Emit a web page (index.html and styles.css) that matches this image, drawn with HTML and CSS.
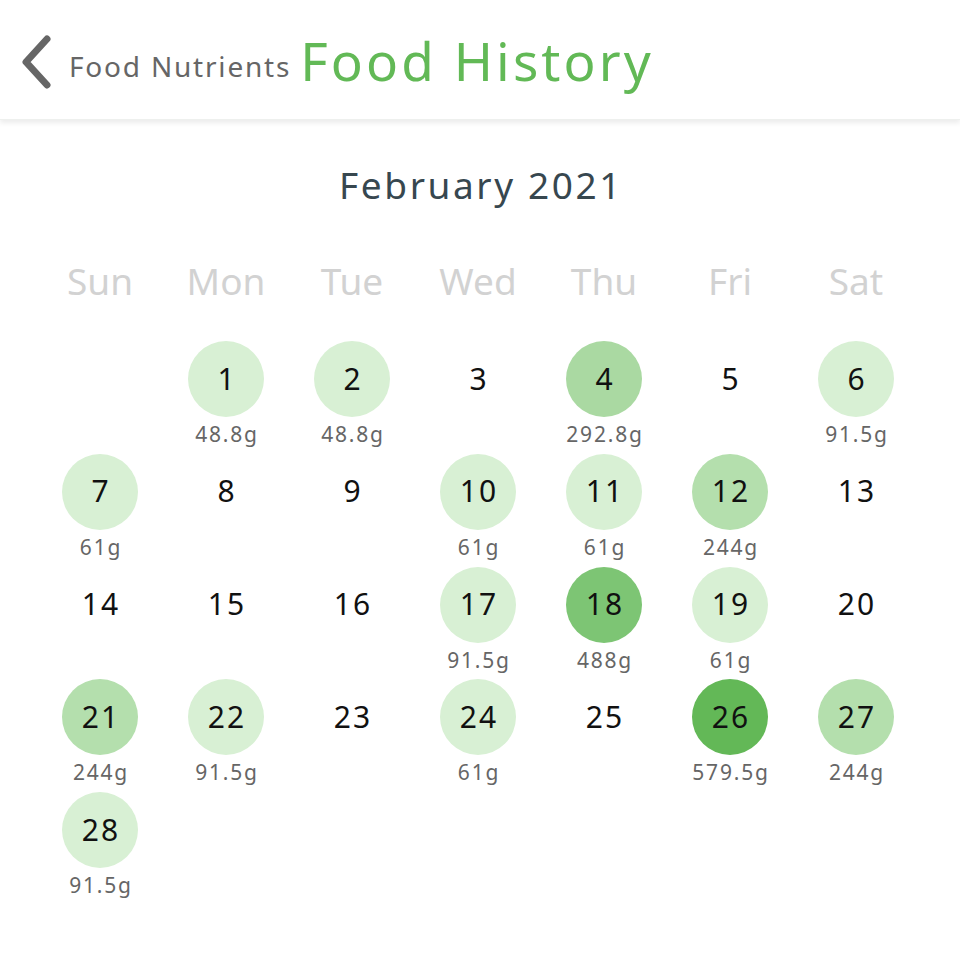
FILE: index.html
```html
<!DOCTYPE html>
<html lang="en">
<head>
    <meta charset="UTF-8">
    <title>Food History</title>
    <link rel="stylesheet" href="styles.css">
</head>
<body>
<div class="header">
    <svg class="back" width="34" height="54" viewBox="0 0 34 54">
        <path d="M28 4 L7 27 L28 50" fill="none" stroke="#666" stroke-width="7" stroke-linecap="round" stroke-linejoin="round"/>
    </svg>
    <span class="prev">Food Nutrients</span>
    <span class="title">Food History</span>
</div>
<div class="month">February 2021</div>
<ul class="week">
    <li>Sun</li><li>Mon</li><li>Tue</li><li>Wed</li><li>Thu</li><li>Fri</li><li>Sat</li>
</ul>
<ul class="days">
    <li></li>
    <li><b class="l1">1</b><i>48.8g</i></li>
    <li><b class="l1">2</b><i>48.8g</i></li>
    <li><b>3</b></li>
    <li><b class="l3">4</b><i>292.8g</i></li>
    <li><b>5</b></li>
    <li><b class="l1">6</b><i>91.5g</i></li>

    <li><b class="l1">7</b><i>61g</i></li>
    <li><b>8</b></li>
    <li><b>9</b></li>
    <li><b class="l1">10</b><i>61g</i></li>
    <li><b class="l1">11</b><i>61g</i></li>
    <li><b class="l2">12</b><i>244g</i></li>
    <li><b>13</b></li>

    <li><b>14</b></li>
    <li><b>15</b></li>
    <li><b>16</b></li>
    <li><b class="l1">17</b><i>91.5g</i></li>
    <li><b class="l4">18</b><i>488g</i></li>
    <li><b class="l1">19</b><i>61g</i></li>
    <li><b>20</b></li>

    <li><b class="l2">21</b><i>244g</i></li>
    <li><b class="l1">22</b><i>91.5g</i></li>
    <li><b>23</b></li>
    <li><b class="l1">24</b><i>61g</i></li>
    <li><b>25</b></li>
    <li><b class="l5">26</b><i>579.5g</i></li>
    <li><b class="l2">27</b><i>244g</i></li>

    <li><b class="l1">28</b><i>91.5g</i></li>
</ul>
</body>
</html>
```

FILE: styles.css
```css
*{
    margin:0;
    padding:0;
    list-style: none;
    box-sizing: border-box;
}
body{
    width: 960px;
    background: #fff;
    font-family: "Noto Sans", "DejaVu Sans", sans-serif;
}
.header{
    height:120px;
    display: flex;
    align-items: center;
    padding-left:19px;
    box-shadow: 0 3px 5px rgba(0,0,0,0.08);
    border-bottom:1px solid #eef0ee;
}
.header .back{
    margin-right:16px;
    margin-top:4px;
}
.header .prev{
    font-size:28px;
    letter-spacing: 1.8px;
    color:#666;
    margin-top:12px;
    margin-right:9px;
}
.header .title{
    font-size:53px;
    color:#62b956;
    letter-spacing: 3.1px;
    margin-top:2px;
}
.month{
    margin-top:40px;
    height:50px;
    line-height:50px;
    text-align: center;
    font-size:37px;
    letter-spacing: 2.6px;
    padding-left:2px;
    color:#37474f;
}
.week{
    margin-top:46px;
    display: grid;
    grid-template-columns: repeat(7, 126px);
    padding-left:37px;
}
.week li{
    height:50px;
    line-height:50px;
    text-align: center;
    font-size:37px;
    color:#d2d2d2;
}
.days{
    margin-top:35px;
    display: grid;
    grid-template-columns: repeat(7, 126px);
    grid-auto-rows: 112.75px;
    padding-left:37px;
}
.days li{
    display: flex;
    flex-direction: column;
    align-items: center;
}
.days b{
    width:76px;
    height:76px;
    border-radius: 50%;
    display: flex;
    align-items: center;
    justify-content: center;
    padding-left:2px;
    padding-bottom:2px;
    font-weight: normal;
    font-size:30px;
    letter-spacing: 2px;
    color:#111;
}
.days i{
    font-style: normal;
    font-size:21px;
    letter-spacing: 1.8px;
    padding-left:2px;
    line-height:24px;
    margin-top:5px;
    color:#666;
}
.days .l1{
    background:#d8f0d4;
}
.days .l2{
    background:#b4dfad;
}
.days .l3{
    background:#aad9a2;
}
.days .l4{
    background:#7dc574;
}
.days .l5{
    background:#63b857;
}
```
